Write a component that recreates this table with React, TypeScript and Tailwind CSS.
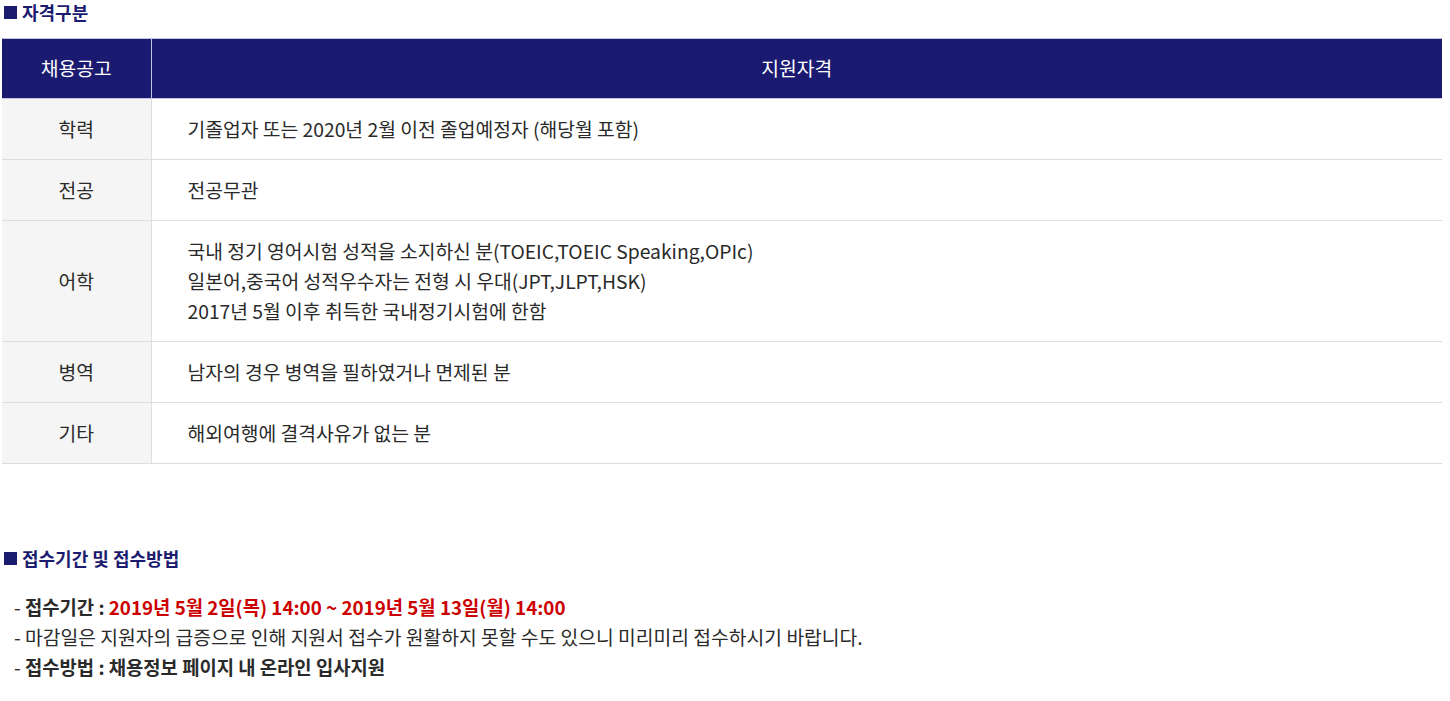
const font = { fontFamily: '"Noto Sans CJK KR", "Noto Sans", sans-serif' };

const rows: { label: string; lines: string[] }[] = [
  { label: "학력", lines: ["기졸업자 또는 2020년 2월 이전 졸업예정자 (해당월 포함)"] },
  { label: "전공", lines: ["전공무관"] },
  {
    label: "어학",
    lines: [
      "국내 정기 영어시험 성적을 소지하신 분(TOEIC,TOEIC Speaking,OPIc)",
      "일본어,중국어 성적우수자는 전형 시 우대(JPT,JLPT,HSK)",
      "2017년 5월 이후 취득한 국내정기시험에 한함",
    ],
  },
  { label: "병역", lines: ["남자의 경우 병역을 필하였거나 면제된 분"] },
  { label: "기타", lines: ["해외여행에 결격사유가 없는 분"] },
];

const SectionTitle = ({ title }: { title: string }) => (
  <h3 className="flex items-center text-[18px] leading-[24px] font-bold text-[#1b1b6f]">
    <span className="ml-[2px] mr-[5px] inline-block h-[13px] w-[13px] bg-[#1b1b6f]" />
    {title}
  </h3>
);

export default function App() {
  return (
    <div className="min-h-screen bg-white text-[#2a2a2a]" style={font}>
      <div className="pl-[2px] pr-[8px]">
        <SectionTitle title="자격구분" />
        <table className="mt-[14px] w-full border-collapse text-[19.3px]">
          <thead>
            <tr className="bg-[#1a1a70] text-white">
              <th className="h-[60px] w-[149px] border-t border-b border-r border-[#c2c2e0] font-normal">
                채용공고
              </th>
              <th className="h-[60px] border-t border-b border-[#c2c2e0] font-normal">지원자격</th>
            </tr>
          </thead>
          <tbody>
            {rows.map((r) => (
              <tr key={r.label} className="border-b border-[#dddddd]">
                <td className="border-r border-[#dddddd] bg-[#f5f5f5] text-center py-[15px] leading-[30px]">
                  {r.label}
                </td>
                <td className="py-[15px] pl-[36px] leading-[30px]">
                  {r.lines.map((l) => (
                    <div key={l}>{l}</div>
                  ))}
                </td>
              </tr>
            ))}
          </tbody>
        </table>

        <div className="mt-[82px]">
          <SectionTitle title="접수기간 및 접수방법" />
        </div>
        <ul className="mt-[22px] pl-[12px] text-[19.3px] leading-[30px]">
          <li>
            - <span className="text-[18.8px] font-bold">접수기간 : </span>
            <span className="text-[18.8px] font-bold text-[#cc0000]">
              2019년 5월 2일(목) 14:00 ~ 2019년 5월 13일(월) 14:00
            </span>
          </li>
          <li>- 마감일은 지원자의 급증으로 인해 지원서 접수가 원활하지 못할 수도 있으니 미리미리 접수하시기 바랍니다.</li>
          <li>
            - <span className="text-[18.8px] font-bold">접수방법 : 채용정보 페이지 내 온라인 입사지원</span>
          </li>
        </ul>
      </div>
    </div>
  );
}
